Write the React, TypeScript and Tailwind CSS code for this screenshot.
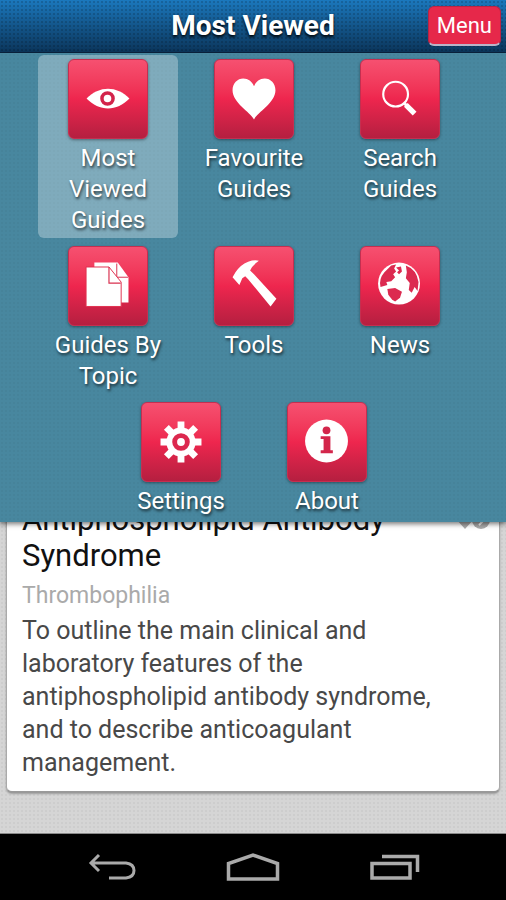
import React, { useState } from "react";

const menuItems = [
  { id: "most-viewed", label: "Most Viewed Guides", icon: <EyeIcon /> },
  { id: "favourites", label: "Favourite Guides", icon: <HeartIcon /> },
  { id: "search", label: "Search Guides", icon: <SearchIcon /> },
  { id: "topics", label: "Guides By Topic", icon: <PagesIcon /> },
  { id: "tools", label: "Tools", icon: <HammerIcon /> },
  { id: "news", label: "News", icon: <GlobeIcon /> },
  { id: "settings", label: "Settings", icon: <GearIcon /> },
  { id: "about", label: "About", icon: <InfoIcon /> },
];

// all tile icons are drawn on an 80x80 grid, the size of the tile
function EyeIcon() {
  return (
    <svg viewBox="0 0 80 80" className="w-full h-full" aria-hidden="true">
      <path d="M18 39.500C31 26 49 26 62 39.500C49 53 31 53 18 39.500Z" fill="#fff" />
      <circle cx="39.5" cy="39.5" r="5.7" fill="#fff" stroke="#d3244b" strokeWidth="3.6" />
    </svg>
  );
}

function HeartIcon() {
  return (
    <svg viewBox="0 0 80 80" className="w-full h-full" aria-hidden="true">
      <path
        d="M40 61C36 53 18 44 18 31C18 24 23 19 29 19C34 19 38 22 40 27C42 22 46 19 51 19C57 19 62 24 62 31C62 44 44 53 40 61Z"
        fill="#fff"
      />
    </svg>
  );
}

function SearchIcon() {
  return (
    <svg viewBox="0 0 80 80" className="w-full h-full" fill="none" stroke="#fff" aria-hidden="true">
      <circle cx="35.5" cy="35" r="12.7" strokeWidth="2.2" />
      <path d="M44 44L47 47" strokeWidth="3" />
      <path d="M46 46L55 55" strokeWidth="5.4" />
    </svg>
  );
}

function PagesIcon() {
  return (
    <svg viewBox="0 0 80 80" className="w-full h-full" aria-hidden="true">
      <path d="M26 16H50L61 31V57H26Z" fill="#fff" />
      <path d="M49 17V31H61" fill="none" stroke="#d9304f" strokeWidth="1" />
      <path d="M17.500 20.500H41L53.500 36V61H17.500Z" fill="#fff" stroke="#e0304f" strokeWidth="1" />
      <path d="M41 20.500V37H53" fill="none" stroke="#d9304f" strokeWidth="1.200" />
    </svg>
  );
}

function HammerIcon() {
  return (
    <svg viewBox="0 0 80 80" className="w-full h-full" fill="#fff" aria-hidden="true">
      <path d="M18 31L21 26Q26 18 34 15Q40 13 45 14Q38 19 36 24L40 28L63 53L57 61L34 33L31 30L28 32L25 39Z" />
    </svg>
  );
}

function GlobeIcon() {
  return (
    <svg viewBox="0 0 80 80" className="w-full h-full" aria-hidden="true">
      <circle cx="39" cy="37.500" r="21.500" fill="#fff" />
      <g fill="#dc2a50">
        <path d="M24 26L31 19L36 18L34 22L36 25L33 28L35 31L31 35L26 36L27 39L20 41Q18 33 24 26Z" />
        <path d="M36 21L41 20L42 25L39 28L37 26L39 24Z" />
        <path d="M46 19Q57 23 59 36L58 45L55 41L52 47L49 44L50 37L46 32L47 26Z" />
        <path d="M27 43L35 42L42 46L40 52L35 56L32 54L28 49Z" />
      </g>
    </svg>
  );
}

function GearIcon() {
  return (
    <svg viewBox="0 0 80 80" className="w-full h-full" aria-hidden="true">
      <g stroke="#fff" strokeWidth="7">
        <path d="M40 19V61M19 40H61M25 25L55 55M55 25L25 55" />
      </g>
      <circle cx="40" cy="40" r="15" fill="#fff" />
      <circle cx="40" cy="40" r="6.500" fill="#fff" stroke="#dc284e" strokeWidth="5" />
    </svg>
  );
}

function InfoIcon() {
  return (
    <svg viewBox="0 0 80 80" className="w-full h-full" aria-hidden="true">
      <circle cx="39.500" cy="39" r="22" fill="#fff" />
      <g fill="#d3264b">
        <circle cx="39.500" cy="28" r="4" />
        <path d="M33.500 34H43.500V48.500H46V51.500H33.500V48.500H36.500V37H33.500Z" />
      </g>
    </svg>
  );
}

function Header({ onMenu }: { onMenu: () => void }) {
  return (
    <div className="h-[53px] grid grid-cols-[1fr_auto_1fr] items-center px-[5px] border-b border-[#0a2440] bg-[radial-gradient(#00000028_1px,transparent_1px),linear-gradient(#1b78bd,#14598f_45%,#0b365c)] bg-[size:4px_4px,100%_100%]">
      <h1 className="col-start-2 text-[28px] font-bold text-white [text-shadow:0_2px_3px_#000]">Most Viewed</h1>
      <button
        onClick={onMenu}
        className="justify-self-end h-10 px-2 rounded-md bg-[#e6284a] text-[22px] leading-none text-white border border-[#b92444] border-b-2 border-b-[#b9b4c8]"
      >
        Menu
      </button>
    </div>
  );
}

function MenuPanel({ active, onSelect }: { active: string; onSelect: (id: string) => void }) {
  return (
    <nav className="absolute inset-x-0 top-full pl-[38px] pr-9 pt-[2px] pb-[3px] flex flex-wrap justify-center gap-x-[6px] gap-y-1 bg-[#48879f] bg-[radial-gradient(#00000008_1px,transparent_1px)] bg-[size:4px_4px] shadow-[0_2px_5px_#0008]">
      {menuItems.map(item => (
        <button
          key={item.id}
          onClick={() => onSelect(item.id)}
          className={`w-[140px] pt-1 px-5 pb-[2px] flex flex-col items-center justify-start rounded-md ${item.id === active ? "bg-white/30" : ""}`}
        >
          <span className="w-20 h-20 mb-1 rounded-md bg-linear-to-b from-[#f65070] via-[#ee264e] to-[#b51f40] border border-[#c42f50] shadow-[0_1px_3px_#0006]">
            {item.icon}
          </span>
          <span className="-mx-4 text-2xl leading-[31px] text-white [text-shadow:1px_2px_3px_#000a]">{item.label}</span>
        </button>
      ))}
    </nav>
  );
}

function GuideCard() {
  return (
    <article className="mx-[6px] pl-[15px] pr-2 pt-2 pb-3 bg-white rounded-md border border-[#aaa] border-b-2 border-b-[#999] shadow-[0_1px_2px_#0004]">
      <div className="flex items-start justify-between">
        <h2 className="text-[31px] leading-9 text-[#111]">Antiphospholipid Antibody Syndrome</h2>
        <svg viewBox="0 0 36 24" className="w-9 h-6 mt-1 shrink-0" aria-hidden="true">
          <path d="M10 23L1 13Q-1 5 5 4Q9 4 10 8Q11 4 15 4Q21 5 19 13Z" fill="#aaa" />
          <circle cx="26" cy="14" r="9" fill="#aaa" />
          <path d="M24 9L29 14L24 19" fill="none" stroke="#fff" strokeWidth="2" />
        </svg>
      </div>
      <p className="mt-1 text-[23px] leading-9 text-[#aaa]">Thrombophilia</p>
      <p className="pr-5 text-[25px] leading-[33px] text-[#484848]">
        To outline the main clinical and laboratory features of the antiphospholipid antibody syndrome, and to describe
        anticoagulant management.
      </p>
    </article>
  );
}

function SystemBar() {
  return (
    <footer className="h-[66px] grid grid-cols-[1fr_auto_1fr] items-center gap-[90px] bg-black text-[#aaa]">
      <button aria-label="Back" className="justify-self-end">
        <svg viewBox="0 0 48 28" className="w-12 h-7" fill="none" stroke="currentColor" strokeWidth="3">
          <path d="M11 2L3 10L11 18M3 10H38Q46 11 46 17.500Q46 24 38 25H21" />
        </svg>
      </button>
      <button aria-label="Home">
        <svg viewBox="0 0 54 30" className="w-[54px] h-[30px]" fill="none" stroke="currentColor" strokeWidth="3.500">
          <path d="M2.500 27V11.500L27 3L51.500 11.500V27Z" />
        </svg>
      </button>
      <button aria-label="Recent apps" className="justify-self-start">
        <svg viewBox="0 0 50 26" className="w-[50px] h-[26px]" fill="none" stroke="currentColor" strokeWidth="3.500">
          <path d="M2 9.500H40V24H2ZM12 2.500H47.500V18" />
        </svg>
      </button>
    </footer>
  );
}

export default function App() {
  const [open, setOpen] = useState(true);
  const [active, setActive] = useState("most-viewed");

  return (
    <div className="min-h-screen flex flex-col font-['Roboto',sans-serif] bg-[#d5d5d5]">
      <header className="relative z-10">
        <Header onMenu={() => setOpen(!open)} />
        {open && <MenuPanel active={active} onSelect={setActive} />}
      </header>
      <main className="flex-1 flex flex-col justify-end pb-10 border-b border-[#888] bg-[radial-gradient(#0000000a_1px,transparent_1px)] bg-[size:4px_4px]">
        <GuideCard />
      </main>
      <SystemBar />
    </div>
  );
}
